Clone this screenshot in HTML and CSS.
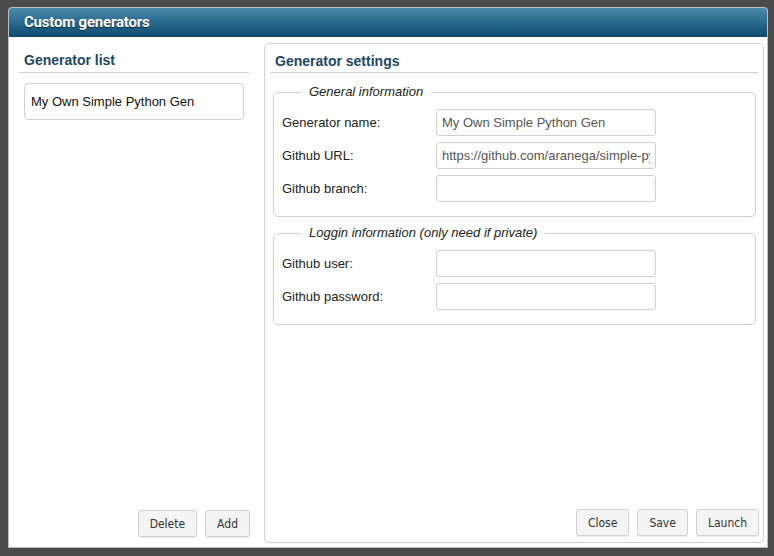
FILE: index.html
```html
<!DOCTYPE html>
<html>
<head>
<meta charset="utf-8">
<link rel="stylesheet" href="styles.css">
</head>
<body>
<div class="dialog">
  <div class="titlebar">Custom generators</div>
  <div class="dialog-body">
    <div class="list-pane">
      <h3 class="pane-title">Generator list</h3>
      <div class="list">
        <div class="list-item">My Own Simple Python Gen</div>
      </div>
      <div class="button-row">
        <button class="btn">Delete</button>
        <button class="btn">Add</button>
      </div>
    </div>
    <div class="settings-panel">
      <h3 class="pane-title settings-title">Generator settings</h3>
      <fieldset class="group">
        <legend>General information</legend>
        <div class="row">
          <label>Generator name:</label>
          <input type="text" value="My Own Simple Python Gen">
        </div>
        <div class="row">
          <label>Github URL:</label>
          <input type="text" value="https://github.com/aranega/simple-python-gen">
        </div>
        <div class="row">
          <label>Github branch:</label>
          <input type="text" value="">
        </div>
      </fieldset>
      <fieldset class="group group-second">
        <legend>Loggin information (only need if private)</legend>
        <div class="row">
          <label>Github user:</label>
          <input type="text" value="">
        </div>
        <div class="row">
          <label>Github password:</label>
          <input type="password" value="">
        </div>
      </fieldset>
      <div class="button-row settings-buttons">
        <button class="btn">Close</button>
        <button class="btn">Save</button>
        <button class="btn">Launch</button>
      </div>
    </div>
  </div>
</div>
</body>
</html>
```

FILE: styles.css
```css
* { box-sizing: border-box; }
html, body { margin: 0; padding: 0; }
body {
  background: #4b4b4b;
  width: 774px;
  height: 556px;
  overflow: hidden;
  font-family: "Liberation Sans", Arial, sans-serif;
  padding: 7px 0 0 8px;
}
.dialog {
  width: 760px;
  height: 541px;
  background: #fff;
  border: 1px solid #bdbdbd;
  border-radius: 4px 4px 0 0;
  display: flex;
  flex-direction: column;
  overflow: hidden;
}
.titlebar {
  height: 29px;
  flex: none;
  background: linear-gradient(to bottom, #4a89aa 0%, #2a6a8e 50%, #0d4a70 100%);
  color: #fff;
  font-family: Roboto, "DejaVu Sans Condensed", sans-serif;
  font-weight: bold;
  font-size: 15px;
  letter-spacing: -0.2px;
  line-height: 29px;
  padding-left: 15px;
  text-shadow: 0 1px 1px rgba(0,0,0,0.6);
}
.dialog-body {
  flex: 1;
  display: flex;
  min-height: 0;
}
.list-pane {
  width: 250px;
  flex: none;
  padding: 13px 9px 10px 10px;
  display: flex;
  flex-direction: column;
}
.pane-title {
  margin: 0;
  font-size: 14px;
  font-weight: bold;
  color: #1b4866;
  line-height: 20px;
  padding: 0 0 2px 5px;
  border-bottom: 1px solid #cfcfcf;
}
.list-pane .pane-title {
  margin-right: 1px;
}
.list {
  flex: 1;
  padding: 10px 6px 0 5px;
}
.list-item {
  height: 37px;
  border: 1px solid #cfcfcf;
  border-radius: 4px;
  font-size: 13px;
  color: #111;
  line-height: 35px;
  padding-left: 6px;
}
.button-row {
  display: flex;
  justify-content: flex-end;
  gap: 8px;
}
.btn {
  height: 27px;
  padding: 0 11px;
  background: #f4f4f4;
  border: 1px solid #d0d0d0;
  border-radius: 3px;
  font-family: "DejaVu Sans Condensed", "DejaVu Sans", sans-serif;
  font-size: 12px;
  color: #333;
  box-shadow: 0 1px 0 rgba(0,0,0,0.08);
}
.settings-panel {
  width: 500px;
  flex: none;
  margin: 6px 3px 4px 5px;
  border: 1px solid #cfcfcf;
  border-radius: 5px;
  padding: 7px 4px 6px 5px;
  display: flex;
  flex-direction: column;
}
.settings-title {
  padding-bottom: 1px;
  margin-right: 1px;
}
.group {
  margin: 11px 3px 0 3px;
  border: 1px solid #cfcfcf;
  border-radius: 5px;
  padding: 9px 8px 14px 8px;
  display: flex;
  flex-direction: column;
  gap: 6px;
  min-width: 0;
}
.group-second {
  margin-top: 8px;
}
.group legend {
  margin-left: 19px;
  padding: 0 8px;
  font-style: italic;
  font-size: 13px;
  line-height: 16px;
  color: #222;
}
.row {
  display: flex;
  align-items: center;
  height: 27px;
}
.row label {
  width: 154px;
  flex: none;
  font-size: 13px;
  color: #222;
}
.row input {
  width: 220px;
  height: 27px;
  border: 1px solid #cfcfcf;
  border-radius: 3px;
  padding: 0 5px;
  font-family: "Liberation Sans", Arial, sans-serif;
  font-size: 13px;
  color: #555;
  outline: none;
}
.settings-buttons {
  margin-top: auto;
}
```
